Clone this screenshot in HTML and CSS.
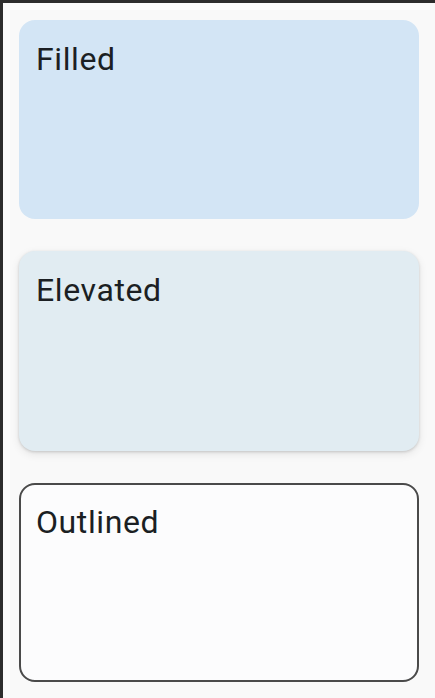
FILE: index.html
```html
<!DOCTYPE html>
<html>
<head>
<meta charset="utf-8">
<link rel="stylesheet" href="styles.css">
</head>
<body>
<div class="screen">
  <div class="card card-filled"><span class="label">Filled</span></div>
  <div class="card card-elevated"><span class="label">Elevated</span></div>
  <div class="card card-outlined"><span class="label">Outlined</span></div>
</div>
</body>
</html>
```
FILE: styles.css
```css
html, body {
  margin: 0;
  padding: 0;
  height: 100%;
}
body {
  background: #2b2b2b;
  font-family: Roboto, "Noto Sans", sans-serif;
  overflow: hidden;
}
.screen {
  box-sizing: border-box;
  margin: 3px 0 0 3px;
  height: calc(100% - 3px);
  background: #f9f9f9;
  padding: 17px 16px 16px 16px;
  display: flex;
  flex-direction: column;
  gap: 32px;
}
.card {
  box-sizing: border-box;
  height: 200px;
  border-radius: 16px;
  padding: 19px 17px;
}
.label {
  font-size: 32px;
  line-height: 40px;
  color: #1b1f23;
  letter-spacing: 0.6px;
}
.card-filled {
  background: #d3e5f5;
}
.card-elevated {
  background: #e1ecf2;
  box-shadow: 0 1px 3px rgba(0,0,0,0.16), 0 3px 10px rgba(0,0,0,0.09);
}
.card-outlined {
  background: #fcfcfd;
  border: 2px solid #4a4a4a;
  padding: 17px 15px;
}
```
